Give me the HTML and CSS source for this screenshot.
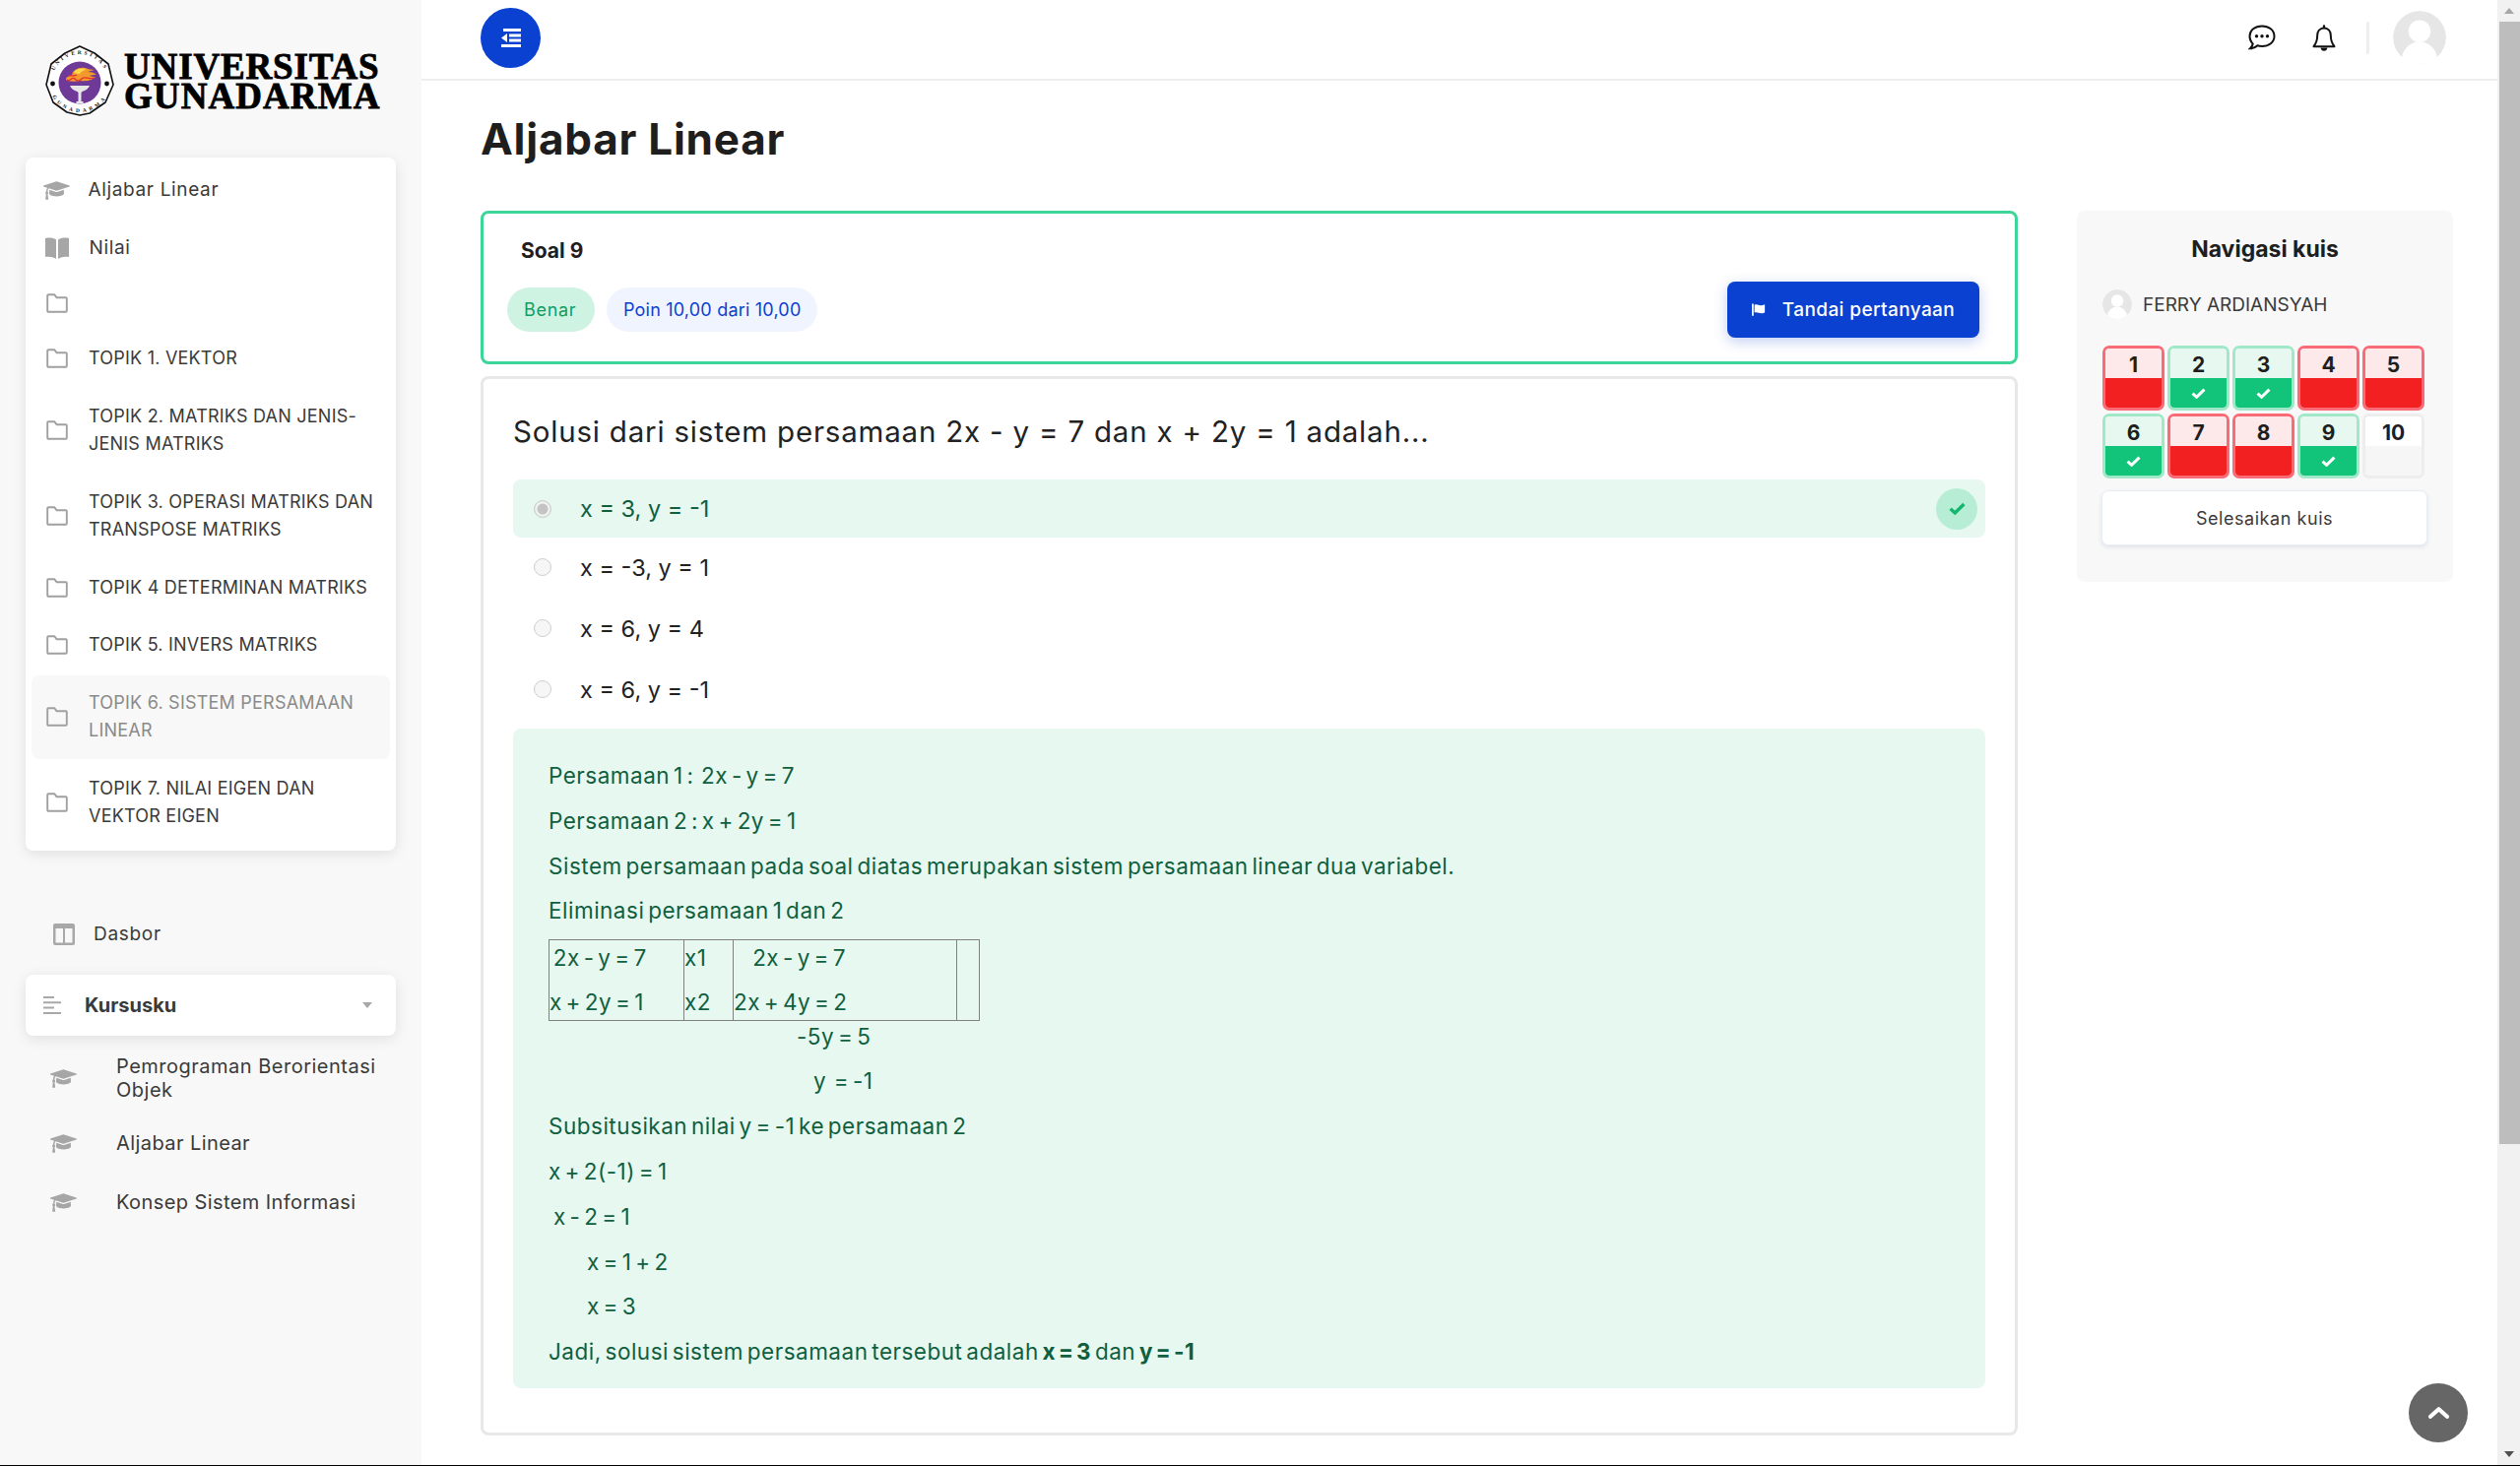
FILE: index.html
```html
<!DOCTYPE html>
<html lang="id">
<head>
<meta charset="utf-8">
<title>Aljabar Linear</title>
<link rel="stylesheet" href="styles.css">
</head>
<body>
<svg class="defs" width="0" height="0" aria-hidden="true">
  <symbol id="cap" viewBox="0 0 2304 1792"><path d="M1774 836l18 316q4 69-82 128t-235 93.5-323 34.5-323-34.5-235-93.5-82-128l18-316 574 181q22 7 48 7t48-7zm530-324q0 34-32 45l-1120 352q-4 1-10 1t-10-1l-652-206q-43 34-71 111.5t-34 178.5q63 36 63 109 0 69-58 107l58 433q2 14-8 25-9 11-24 11h-192q-15 0-24-11-10-11-8-25l58-433q-58-38-58-107 0-73 65-111 11-207 98-330l-333-104q-32-11-32-45t32-45l1120-352q4-1 10-1t10 1l1120 352q32 11 32 45z"/></symbol>
  <symbol id="folder" viewBox="0 0 22 20"><path d="M1.2 2.2a1 1 0 0 1 1-1h6l2.4 3h9.2a1 1 0 0 1 1 1v12.600a1 1 0 0 1-1 1H2.200a1 1 0 0 1-1-1z" fill="none" stroke="currentColor" stroke-width="1.9"/></symbol>
  <symbol id="tick" viewBox="0 0 16 12"><path d="M1.500 6.200l4.400 4L14.500 1.800" fill="none" stroke="currentColor" stroke-width="3.200"/></symbol>
  <symbol id="user" viewBox="0 0 60 60"><circle cx="30" cy="30" r="30" fill="#e6e6e6"/><circle cx="30" cy="23" r="12.500" fill="#fff"/><ellipse cx="30" cy="55" rx="20" ry="20" fill="#fff"/></symbol>
</svg>

<aside class="sidebar">
  <div class="logo">
    <svg class="emblem" viewBox="0 0 70 72">
      <path d="M35 1 L50 8 L64 19 L69 40 L61 58 L45 69 L35 71 L22 68 L8 58 L1 40 L6 19 L20 8 Z" fill="#fff" stroke="#111" stroke-width="1.600" stroke-linejoin="round"/>
      <defs>
        <path id="arcTop" d="M7 37 A28 28 0 0 1 63 37"/>
        <path id="arcBot" d="M3 36 A32 32 0 0 0 67 36"/>
      </defs>
      <text class="emblem-text et-top"><textPath href="#arcTop" startOffset="50%" text-anchor="middle">UNIVERSITAS</textPath></text>
      <text class="emblem-text et-bot"><textPath href="#arcBot" startOffset="50%" text-anchor="middle">GUNADARMA</textPath></text>
      <circle cx="7.500" cy="39" r="2.400" fill="#111"/><circle cx="62.500" cy="39" r="2.400" fill="#111"/>
      <circle cx="35" cy="38" r="21.500" fill="#6f3a97"/>
      <path d="M21 35c0-4 4-3 6-5 1-5 7-8 13-7 4 1 7 2 10 2-3 1-5 1-7 2 4 0 7 1 9 3-3 0-5 0-7 1 2 1 4 1 6 1-4 4-9 5-16 4-5 1-12 1-14-1z" fill="#f39a2d"/>
      <path d="M29 27c3-4 9-4 13-3-3 1-6 3-7 5-2 0-5 0-6-2z" fill="#ffd84a"/>
      <path d="M22 35c3 3 5-4 8-1s4 3 7 0 6 1 13-1M24 31c3-1 5 1 8-1" fill="none" stroke="#e3342f" stroke-width="1.300"/>
      <path d="M25 41h20c-1 3-4 5-7.500 6l-1 1v9h2v2h-7v-2h2v-9l-1-1c-3.500-1-6.500-3-7.500-6z" fill="#e6e6e6"/>
    </svg>
    <div class="wordmark"><span class="wm-a">UNIVERSITAS</span><span class="wm-b">GUNADARMA</span></div>
  </div>

  <nav class="course-card">
    <a class="side-item lc"><svg class="ic-cap"><use href="#cap"/></svg><span>Aljabar Linear</span></a>
    <a class="side-item lc"><svg class="ic-book" viewBox="0 0 24 22"><path d="M0 1c4-1 8-.5 11 1.500V22C8 20 4 19.500 0 20zM24 1c-4-1-8-.5-11 1.500V22c3-2 7-2.500 11-2z"/></svg><span>Nilai</span></a>
    <a class="side-item empty"><svg class="ic-folder"><use href="#folder"/></svg></a>
    <a class="side-item"><svg class="ic-folder"><use href="#folder"/></svg><span>TOPIK 1. VEKTOR</span></a>
    <a class="side-item"><svg class="ic-folder"><use href="#folder"/></svg><span>TOPIK 2. MATRIKS DAN JENIS-JENIS MATRIKS</span></a>
    <a class="side-item"><svg class="ic-folder"><use href="#folder"/></svg><span>TOPIK 3. OPERASI MATRIKS DAN TRANSPOSE MATRIKS</span></a>
    <a class="side-item"><svg class="ic-folder"><use href="#folder"/></svg><span>TOPIK 4 DETERMINAN MATRIKS</span></a>
    <a class="side-item"><svg class="ic-folder"><use href="#folder"/></svg><span>TOPIK 5. INVERS MATRIKS</span></a>
    <a class="side-item active"><svg class="ic-folder"><use href="#folder"/></svg><span>TOPIK 6. SISTEM PERSAMAAN LINEAR</span></a>
    <a class="side-item"><svg class="ic-folder"><use href="#folder"/></svg><span>TOPIK 7. NILAI EIGEN DAN VEKTOR EIGEN</span></a>
  </nav>

  <a class="dash-link">
    <svg class="ic-dash" viewBox="0 0 22 22"><path d="M0 2a2 2 0 0 1 2-2h18a2 2 0 0 1 2 2v18a2 2 0 0 1-2 2H2a2 2 0 0 1-2-2zM2.500 5v14.500H10V5zM12 5v14.500h7.500V5z" fill-rule="evenodd"/></svg>
    <span>Dasbor</span>
  </a>

  <div class="my-courses">
    <svg class="ic-lines" viewBox="0 0 18 20"><path d="M0 1h11v2H0zM0 6.300h18v2H0zM0 11.600h11v2H0zM0 17h18v2H0z"/></svg>
    <strong>Kursusku</strong>
    <i class="caret"></i>
  </div>

  <ul class="course-list">
    <li><svg class="ic-cap"><use href="#cap"/></svg><span>Pemrograman Berorientasi Objek</span></li>
    <li><svg class="ic-cap"><use href="#cap"/></svg><span>Aljabar Linear</span></li>
    <li><svg class="ic-cap"><use href="#cap"/></svg><span>Konsep Sistem Informasi</span></li>
  </ul>
</aside>

<div class="main">
  <header class="topbar">
    <button class="toggle" aria-label="menu">
      <svg viewBox="0 0 20 19" width="20" height="19"><path d="M2 0h18v3H2zM8 5.500h12v3H8zM8 10.500h12v3H8zM0 16h20v3H0zM0 9.500L6 5v9z" fill="#fff"/></svg>
    </button>
    <div class="top-icons">
      <svg class="ic-chat" viewBox="0 0 28 26"><path d="M14 1.500c7 0 12.500 4 12.500 10.200S21 22 14 22c-1.600 0-3.200-.2-4.600-.7C7.700 23 5 24.300 2 24.300c1.400-1.300 2.400-3 2.700-4.800C2.700 17.600 1.500 14.900 1.500 11.700 1.500 5.500 7 1.500 14 1.500z" fill="none" stroke="#111" stroke-width="2"/><circle cx="8.500" cy="11.800" r="1.700"/><circle cx="14" cy="11.800" r="1.700"/><circle cx="19.500" cy="11.800" r="1.700"/></svg>
      <svg class="ic-bell" viewBox="0 0 24 28"><path d="M12 3.500c4.300 0 6.800 3.300 6.800 7.500 0 5 1.300 8.200 3.700 11.200h-21C3.900 19.200 5.200 16 5.200 11c0-4.200 2.500-7.500 6.800-7.500z" fill="none" stroke="#111" stroke-width="2" stroke-linejoin="round"/><path d="M8.500 23.500h7c-.3 2-1.700 3.300-3.500 3.300s-3.200-1.300-3.500-3.300zM10.800 1.500a1.200 1.200 0 0 1 2.400 0v2.500h-2.400z"/></svg>
      <span class="divider"></span>
      <svg class="ic-avatar"><use href="#user"/></svg>
    </div>
  </header>

  <h1 class="page-title">Aljabar Linear</h1>

  <div class="columns">
    <section class="quiz">
      <div class="status-card">
        <h2 class="soal">Soal 9</h2>
        <div class="status-row">
          <span class="badge badge-ok">Benar</span>
          <span class="badge badge-score">Poin 10,00 dari 10,00</span>
          <button class="flag-btn">
            <svg viewBox="0 0 16 14" width="14" height="13"><path d="M0 0h2v14H0zM3 1.500c3-1.500 5 .8 8 .5 2 0 3-.5 4-1v9c-1 .8-2.500 1.300-4 1.300-3 0-5-2-8-.8z" fill="#fff"/></svg>
            <span>Tandai pertanyaan</span>
          </button>
        </div>
      </div>

      <div class="question-card">
        <p class="question">Solusi dari sistem persamaan 2x - y = 7 dan x + 2y = 1 adalah...</p>
        <div class="option correct">
          <span class="radio checked"></span><span>x = 3, y = -1</span>
          <span class="ok-mark"><svg width="17" height="13"><use href="#tick"/></svg></span>
        </div>
        <div class="option"><span class="radio"></span><span>x = -3, y = 1</span></div>
        <div class="option"><span class="radio"></span><span>x = 6, y = 4</span></div>
        <div class="option"><span class="radio"></span><span>x = 6, y = -1</span></div>

        <div class="feedback">
          <p>Persamaan 1 :&nbsp; 2x - y = 7</p>
          <p>Persamaan 2 : x + 2y = 1</p>
          <p>Sistem persamaan pada soal diatas merupakan sistem persamaan linear dua variabel.</p>
          <p>Eliminasi persamaan 1 dan 2</p>
          <table class="work">
            <tr class="row-a"><td class="c1">&nbsp;2x - y = 7</td><td class="c2">x1</td><td class="c3">&nbsp; &nbsp; &nbsp;2x - y = 7</td><td class="c4"></td></tr>
            <tr class="row-b"><td class="c1">x + 2y = 1</td><td class="c2">x2</td><td class="c3">2x + 4y = 2</td><td class="c4"></td></tr>
          </table>
          <p class="indent-a">-5y = 5</p>
          <p class="indent-b">y&nbsp; = -1</p>
          <p>Subsitusikan nilai y = -1 ke persamaan 2</p>
          <p>x + 2(-1) = 1</p>
          <p class="indent-c">x - 2 = 1</p>
          <p class="indent-d">x = 1 + 2</p>
          <p class="indent-d">x = 3</p>
          <p>Jadi, solusi sistem persamaan tersebut adalah <b>x = 3</b> dan <b>y = -1</b></p>
        </div>
      </div>
    </section>

    <aside class="quiz-nav">
      <h3>Navigasi kuis</h3>
      <div class="nav-user"><svg class="nav-avatar"><use href="#user"/></svg><span>FERRY ARDIANSYAH</span></div>
      <div class="nav-grid">
        <a class="cell wrong"><b>1</b><i></i></a>
        <a class="cell right"><b>2</b><i><svg width="15" height="11"><use href="#tick"/></svg></i></a>
        <a class="cell right"><b>3</b><i><svg width="15" height="11"><use href="#tick"/></svg></i></a>
        <a class="cell wrong"><b>4</b><i></i></a>
        <a class="cell wrong"><b>5</b><i></i></a>
        <a class="cell right"><b>6</b><i><svg width="15" height="11"><use href="#tick"/></svg></i></a>
        <a class="cell wrong"><b>7</b><i></i></a>
        <a class="cell wrong"><b>8</b><i></i></a>
        <a class="cell right"><b>9</b><i><svg width="15" height="11"><use href="#tick"/></svg></i></a>
        <a class="cell blank"><b>10</b><i></i></a>
      </div>
      <button class="finish">Selesaikan kuis</button>
    </aside>
  </div>
</div>

<div class="scrollbar">
  <span class="sb-btn"><i class="arrow-up"></i></span>
  <span class="sb-thumb"></span>
  <span class="sb-track"></span>
  <span class="sb-btn"><i class="arrow-down"></i></span>
</div>

<button class="back-top" aria-label="ke atas">
  <svg viewBox="0 0 24 16" width="23" height="15"><path d="M3 11.500L12 3.500l9 8" fill="none" stroke="#fff" stroke-width="4.500" stroke-linecap="round" stroke-linejoin="round"/></svg>
</button>
</body>
</html>
```

FILE: styles.css
```css
* { box-sizing: border-box; }
html, body { height: 100%; }
body {
  margin: 0;
  height: 1489px;
  display: flex;
  overflow: hidden;
  background: #fff;
  color: #1e1e1e;
  font-family: Inter, "Open Sans", sans-serif;
  border-bottom: 1px solid #000;
}
.defs { position: absolute; }
button { font-family: inherit; cursor: pointer; }

/* Sidebar */
.sidebar { width: 428px; flex: none; background: #f8f8f8; padding: 46px 26px 0; }
.logo { display: flex; align-items: flex-start; gap: 10px; margin: 0 0 42px 20px; height: 72px; }
.emblem { width: 70px; height: 72px; flex: none; }
.emblem-text { font: 700 5.400px "Liberation Serif", serif; fill: #111; }
.et-top { letter-spacing: 2.600px; }
.et-bot { letter-spacing: 3.400px; }
.wordmark { display: flex; flex-direction: column; font: 900 37px/30px "Liberation Serif", serif; color: #000; -webkit-text-stroke: .8px #000; margin-top: 7px; }
.wm-a { letter-spacing: .85px; }
.wm-b { letter-spacing: 1.08px; }

.course-card {
  background: #fff;
  border-radius: 8px;
  box-shadow: 0 3px 14px rgba(0,0,0,.1);
  padding: 5px 6px 5px;
  height: 704px;
}
.side-item {
  display: flex;
  align-items: center;
  margin: 0 0 2px;
  padding: 14px 10px 14px 0;
  border-radius: 8px;
  font-size: 18px;
  line-height: 28.500px;
  color: #3a3a3a;
  letter-spacing: .22px;
}
.side-item.lc { font-size: 19px; letter-spacing: .65px; }
.side-item.empty { height: 52px; }
.side-item.active { background: #f8f8f8; color: #8a8a8a; }
.ic-cap { width: 27px; height: 21px; fill: #a6a6a6; flex: none; }
.side-item .ic-cap { margin: 0 18.500px 0 12px; }
.ic-book { width: 24px; height: 22px; fill: #a6a6a6; flex: none; margin: 0 20.500px 0 14px; }
.ic-folder { width: 22px; height: 20px; color: #a0a0a0; flex: none; margin: 0 21px 0 15px; }

.dash-link { display: flex; align-items: center; margin-top: 73px; padding-left: 28px; font-size: 19px; line-height: 24px; color: #3a3a3a; letter-spacing: .7px; }
.ic-dash { width: 22px; height: 22px; fill: #a8a8a8; margin-right: 19px; }

.my-courses {
  display: flex;
  align-items: center;
  height: 62px;
  margin-top: 29px;
  padding: 0 24px 0 18px;
  background: #fff;
  border-radius: 8px;
  box-shadow: 0 3px 14px rgba(0,0,0,.1);
  font-size: 20px;
  color: #3a3a3a;
}
.ic-lines { width: 18px; height: 20px; fill: #a8a8a8; margin-right: 24px; }
.my-courses strong { flex: 1; font-weight: 700; }
.caret { width: 0; height: 0; border: 5px solid transparent; border-top: 6px solid #a8a8a8; border-bottom: 0; }

.course-list { list-style: none; margin: 19px 0 0; padding: 0; }
.course-list li { display: flex; align-items: center; margin-bottom: 36px; padding-left: 25px; font-size: 20px; line-height: 24px; color: #3a3a3a; letter-spacing: .42px; }
.course-list li:first-child { margin-bottom: 30px; letter-spacing: .5px; }
.course-list .ic-cap { margin-right: 40px; }
.course-list span { width: 280px; }

/* Main */
.main { flex: 1; min-width: 0; }
.topbar { height: 82px; border-bottom: 2px solid #eee; display: flex; align-items: flex-start; justify-content: space-between; padding: 8px 0 0 60px; }
.toggle { width: 61px; height: 61px; border: 0; border-radius: 50%; background: #0a41d0; display: flex; align-items: center; justify-content: center; padding: 0; }
.top-icons { display: flex; align-items: center; height: 60px; margin-right: 52px; }
.ic-chat { width: 28px; height: 26px; margin-right: 37px; fill: #111; }
.ic-bell { width: 24px; height: 28px; margin-right: 31px; margin-top: 2px; fill: #111; }
.divider { width: 3px; height: 33px; background: #eee; border-radius: 2px; margin-right: 24px; }
.ic-avatar { width: 54px; height: 54px; border-radius: 50%; }

.page-title { margin: 29px 0 43px 60px; font-size: 44px; line-height: 60px; font-weight: 700; color: #1e1e1e; letter-spacing: .75px; }
.columns { display: flex; gap: 60px; padding: 0 45px 0 60px; align-items: flex-start; }
.quiz { flex: 1; min-width: 0; }

.status-card { border: 3px solid #3dd598; border-radius: 8px; padding: 23px 36px 24px 24px; height: 156px; }
.soal { margin: 0 0 16px 14px; font-size: 21px; line-height: 30px; font-weight: 700; color: #1e1e1e; }
.status-row { display: flex; align-items: center; gap: 12px; }
.badge { height: 45px; display: flex; align-items: center; padding: 0 17px; border-radius: 23px; font-size: 18px; letter-spacing: .2px; white-space: nowrap; }
.badge-ok { background: #cff3e2; color: #0f9d62; width: 89px; letter-spacing: .7px; }
.badge-score { background: #f0f4fe; color: #0a41d0; width: 214px; }
.flag-btn { margin-left: auto; width: 256px; height: 57px; border: 0; border-radius: 8px; background: #0a41d0; color: #fff; font-size: 19px; font-weight: 500; letter-spacing: .4px; display: flex; align-items: center; justify-content: center; gap: 17px; box-shadow: 0 4px 14px rgba(10,65,208,.25); }

.question-card { margin-top: 12px; height: 1076px; border: 3px solid #e8e8e8; border-radius: 8px; padding: 31px 30px 0; }
.question { margin: 0 0 27px; font-size: 29.500px; line-height: 44px; color: #222; letter-spacing: .8px; }
.option { display: flex; align-items: center; height: 62px; padding-left: 21px; font-size: 23.500px; color: #222; }
.option.correct { height: 59px; margin-bottom: -1px; background: #e7f8f0; border-radius: 8px; color: #0f5f3f; padding-left: 21px; }
.radio { width: 18px; height: 18px; border-radius: 50%; background: #f6f6f6; border: 1.500px solid #cfcfcf; margin-right: 29px; flex: none; }
.radio.checked { background: #c4c4c4; box-shadow: inset 0 0 0 2.500px #eef3f0; }
.ok-mark { margin-left: auto; margin-right: 8px; width: 42px; height: 42px; border-radius: 50%; background: #b8edd5; color: #12b76f; display: flex; align-items: center; justify-content: center; }

.feedback { margin-top: 9px; height: 670px; background: #e7f8f0; border-radius: 8px; padding: 32px 36px 0; color: #0f5f3f; font-size: 22.500px; letter-spacing: .5px; word-spacing: -3px; }
.feedback p { margin: 0 0 13.800px; line-height: 32px; }
.feedback b { font-weight: 700; letter-spacing: .4px; }
.work { border-collapse: collapse; margin-top: -1px; width: 437px; table-layout: fixed; border: 1px solid #808080; }
.work td { padding: 0; border-left: 1px solid #808080; border-right: 1px solid #808080; line-height: 36px; }
.row-a td { height: 36px; vertical-align: top; }
.row-b td { height: 45px; vertical-align: bottom; }
.c1 { width: 137px; } .c2 { width: 50px; } .c3 { width: 227px; } .c4 { width: 23px; }
.indent-a { padding-left: 252px; }
.indent-b { padding-left: 269px; }
.indent-c { padding-left: 5px; }
.indent-d { padding-left: 39px; }

/* Quiz navigation */
.quiz-nav { width: 382px; flex: none; height: 377px; background: #f8f8f8; border-radius: 8px; padding: 24px 26px 0; }
.quiz-nav h3 { margin: 0; text-align: center; font-size: 23px; line-height: 30px; font-weight: 700; color: #1e1e1e; }
.nav-user { display: flex; align-items: center; gap: 11px; margin-top: 26px; font-size: 19px; color: #3a3a3a; height: 30px; }
.nav-avatar { width: 30px; height: 30px; border-radius: 50%; }
.nav-grid { display: grid; grid-template-columns: repeat(5, 63px); grid-auto-rows: 66px; gap: 3px; margin-top: 27px; }
.cell { display: flex; flex-direction: column; border: 3px solid; border-radius: 7px; overflow: hidden; }
.cell b { height: 30px; padding-top: 2px; display: flex; align-items: center; justify-content: center; font-size: 21px; color: #1e1e1e; }
.cell i { flex: 1; display: flex; align-items: center; justify-content: center; color: #fff; }
.cell.wrong { border-color: #f96b77; }
.cell.wrong b { background: #fde8ea; }
.cell.wrong i { background: #f22020; }
.cell.right { border-color: #a0e8c8; }
.cell.right b { background: #e7f8f0; }
.cell.right i { background: #12c479; }
.cell.blank { border-color: #ededed; }
.cell.blank b { background: #fff; }
.cell.blank i { background: #f6f6f6; }
.finish { display: block; margin-top: 12px; margin-left: -1px; width: 331px; height: 56px; background: #fff; border: 1px solid #e8ecf4; border-radius: 7px; box-shadow: 0 2px 4px rgba(30,50,110,.1); font-size: 18px; letter-spacing: .55px; color: #3a3a3a; }

/* Scrollbar */
.scrollbar { width: 23px; flex: none; display: flex; flex-direction: column; align-items: flex-end; background: #f1f1f1; }
.sb-btn { height: 22px; width: 100%; display: flex; align-items: center; justify-content: center; flex: none; }
.arrow-up { border: 5.500px solid transparent; border-bottom: 6px solid #a6a6a6; border-top: 0; }
.arrow-down { border: 5.500px solid transparent; border-top: 6px solid #505050; border-bottom: 0; }
.sb-thumb { width: 21px; height: 1140px; background: #bdbdbd; flex: none; }
.sb-track { flex: 1; }

.back-top { position: fixed; left: 2446px; top: 1405px; width: 60px; height: 60px; border: 0; border-radius: 50%; background: #666; display: flex; align-items: center; justify-content: center; padding: 0; }
```
